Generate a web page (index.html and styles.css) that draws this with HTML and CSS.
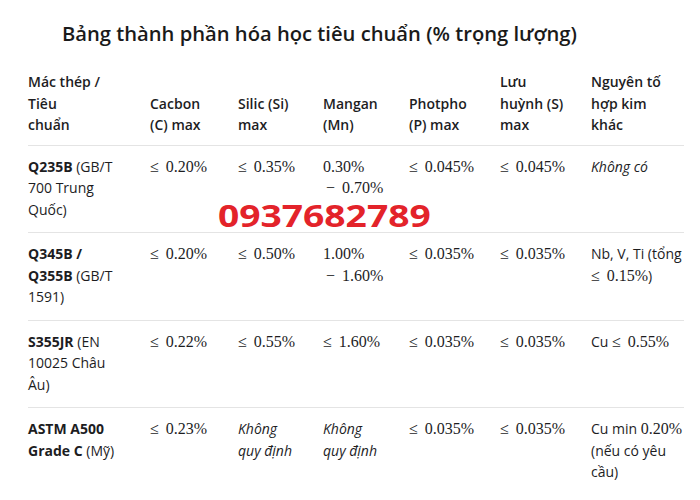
FILE: index.html
```html
<!DOCTYPE html>
<html lang="vi">
<head>
<meta charset="utf-8">
<title>Bảng thành phần hóa học</title>
<link rel="stylesheet" href="styles.css">
</head>
<body>
<div class="page">
  <h1 class="title">Bảng thành phần hóa học tiêu chuẩn (% trọng lượng)</h1>
  <table class="spec">
    <colgroup>
      <col class="c1"><col class="c2"><col class="c3"><col class="c4"><col class="c5"><col class="c6"><col class="c7">
    </colgroup>
    <thead>
      <tr>
        <th>Mác thép /<br>Tiêu<br>chuẩn</th>
        <th>Cacbon<br>(C) max</th>
        <th>Silic (Si)<br>max</th>
        <th>Mangan<br>(Mn)</th>
        <th>Photpho<br>(P) max</th>
        <th>Lưu<br>huỳnh (S)<br>max</th>
        <th>Nguyên tố<br>hợp kim<br>khác</th>
      </tr>
    </thead>
    <tbody>
      <tr>
        <td><b>Q235B</b> (GB/T<br>700 Trung<br>Quốc)</td>
        <td><span class="m">≤ 0.20%</span></td>
        <td><span class="m">≤ 0.35%</span></td>
        <td><span class="m">0.30%</span><br><span class="m ind">− 0.70%</span></td>
        <td><span class="m">≤ 0.045%</span></td>
        <td><span class="m">≤ 0.045%</span></td>
        <td><i>Không có</i></td>
      </tr>
      <tr>
        <td><b>Q345B /<br>Q355B</b> (GB/T<br>1591)</td>
        <td><span class="m">≤ 0.20%</span></td>
        <td><span class="m">≤ 0.50%</span></td>
        <td><span class="m">1.00%</span><br><span class="m ind">− 1.60%</span></td>
        <td><span class="m">≤ 0.035%</span></td>
        <td><span class="m">≤ 0.035%</span></td>
        <td>Nb, V, Ti (tổng<br><span class="m">≤ 0.15%</span>)</td>
      </tr>
      <tr>
        <td><b>S355JR</b> (EN<br>10025 Châu<br>Âu)</td>
        <td><span class="m">≤ 0.22%</span></td>
        <td><span class="m">≤ 0.55%</span></td>
        <td><span class="m">≤ 1.60%</span></td>
        <td><span class="m">≤ 0.035%</span></td>
        <td><span class="m">≤ 0.035%</span></td>
        <td>Cu <span class="m">≤ 0.55%</span></td>
      </tr>
      <tr>
        <td><b>ASTM A500<br>Grade C</b> (Mỹ)</td>
        <td><span class="m">≤ 0.23%</span></td>
        <td><i>Không<br>quy định</i></td>
        <td><i>Không<br>quy định</i></td>
        <td><span class="m">≤ 0.035%</span></td>
        <td><span class="m">≤ 0.035%</span></td>
        <td>Cu min <span class="m">0.20%</span><br>(nếu có yêu<br>cầu)</td>
      </tr>
    </tbody>
  </table>
  <div class="watermark"><span>0937682789</span></div>
</div>
</body>
</html>
```

FILE: styles.css
```css
html, body {
  margin: 0;
  padding: 0;
  background: #ffffff;
}

.page {
  position: relative;
  width: 700px;
  height: 500px;
  overflow: hidden;
  padding: 19px 0 0 28px;
  box-sizing: border-box;
  font-family: "Open Sans", "Noto Sans", sans-serif;
  color: #1d1d1f;
}

.title {
  margin: 0 0 14px 34px;
  font-size: 20.2px;
  line-height: 28px;
  font-weight: 600;
  letter-spacing: 0;
  color: #1a1a1a;
}

.spec {
  border-collapse: collapse;
  table-layout: fixed;
  width: 656px;
  font-size: 14px;
  line-height: 21.5px;
}

.c1 { width: 122px; }
.c2 { width: 88px; }
.c3 { width: 85px; }
.c4 { width: 86px; }
.c5 { width: 91px; }
.c6 { width: 91px; }
.c7 { width: 93px; }

.spec th {
  text-align: left;
  vertical-align: bottom;
  font-weight: 600;
  padding: 10px 0 9px 0;
  white-space: nowrap;
  border-bottom: 1px solid #e4e4e4;
}

.spec td {
  vertical-align: top;
  padding: 10px 0 12px 0;
  white-space: nowrap;
  border-bottom: 1px solid #e4e4e4;
}

.spec tbody tr:last-child td {
  border-bottom: none;
}

.spec b {
  font-weight: 700;
}

.spec i {
  font-style: italic;
}

.m {
  font-family: "Liberation Serif", "Times New Roman", serif;
  font-size: 16px;
  word-spacing: 3px;
}

.ind {
  padding-left: 3px;
}

.watermark {
  position: absolute;
  left: 218px;
  top: 200px;
  font-family: "Open Sans", sans-serif;
  font-weight: 700;
  font-size: 31px;
  line-height: 31px;
  color: #e3232a;
}

.watermark span {
  display: inline-block;
  transform: scaleX(1.2);
  transform-origin: left center;
}
```
